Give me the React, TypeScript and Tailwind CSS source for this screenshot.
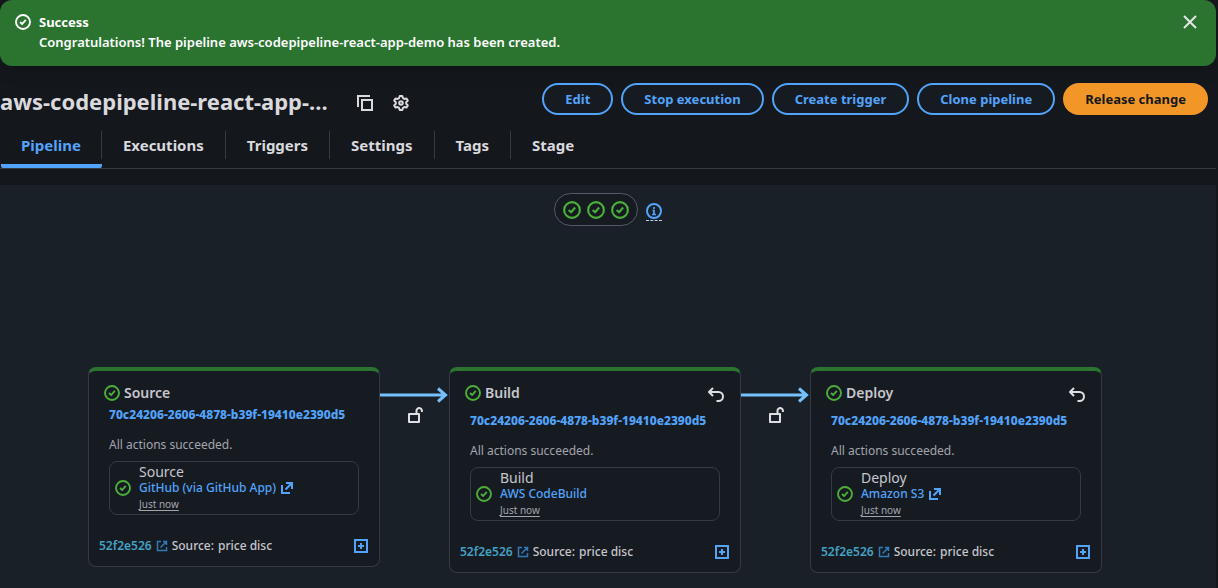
import React from "react";

type IconProps = { className?: string };

const SuccessIcon = ({ className = "" }: IconProps) => (
  <svg viewBox="0 0 16 16" fill="none" stroke="currentColor" strokeWidth="1.9" strokeLinejoin="round" className={className} aria-hidden="true">
    <circle cx="8" cy="8" r="7" />
    <path d="m5 8 2.200 2 3.600-4.200" />
  </svg>
);

const CloseIcon = () => (
  <svg viewBox="0 0 16 16" fill="none" stroke="currentColor" strokeWidth="2" className="size-4" aria-hidden="true">
    <path d="m2 2 12 12M14 2 2 14" />
  </svg>
);

const CopyIcon = () => (
  <svg viewBox="0 0 16 16" fill="none" stroke="currentColor" strokeWidth="2" className="size-4" aria-hidden="true">
    <path d="M1 12V1h12" />
    <path d="M5 5h10v10H5z" />
  </svg>
);

const GearIcon = () => (
  <svg viewBox="0 0 16 16" fill="none" stroke="currentColor" strokeWidth="2" strokeLinejoin="round" className="size-4" aria-hidden="true">
    <path d="M6.700 1h2.600l.7 2.200 1.200.7 2.300-.5 1.300 2.200-1.600 1.700v1.400l1.600 1.700-1.300 2.200-2.300-.5-1.200.7L9.300 15H6.700L6 12.800l-1.200-.7-2.300.5-1.300-2.200 1.600-1.700V7.300L1.200 5.600l1.300-2.200 2.300.5L6 3.200z" />
    <circle cx="8" cy="8" r="1.800" />
  </svg>
);

const InfoIcon = () => (
  <svg viewBox="0 0 16 16" fill="none" stroke="currentColor" strokeWidth="2" className="size-4" aria-hidden="true">
    <circle cx="8" cy="8" r="7" />
    <path d="M8 4v2M6.500 7.500H8V11M6 11.500h4" strokeWidth="1.700" />
  </svg>
);

const UndoIcon = () => (
  <svg viewBox="0 0 16 16" fill="none" stroke="currentColor" strokeWidth="2" strokeLinejoin="round" className="size-4" aria-hidden="true">
    <path d="M5 1 1 5l4 4" />
    <path d="M1 5h9.500a4.500 4.500 0 0 1 0 9H8.500" />
  </svg>
);

const UnlockIcon = () => (
  <svg viewBox="0 0 16 16" fill="none" stroke="currentColor" strokeWidth="2" strokeLinejoin="round" className="size-4" aria-hidden="true">
    <path d="M2 7h10v8H2z" />
    <path d="M9.500 7V4a2.700 2.700 0 0 1 5.400-.5V5" />
  </svg>
);

const ExternalIcon = ({ className = "" }: IconProps) => (
  <svg viewBox="0 0 14 14" fill="none" stroke="currentColor" strokeWidth="2" className={className} aria-hidden="true">
    <path d="M6 2h6v6M12 2 5.500 8.500M2 4v8h8" />
  </svg>
);

const BoxedExternalIcon = () => (
  <svg viewBox="0 0 12 12" fill="none" stroke="currentColor" strokeWidth="1.500" className="size-3" aria-hidden="true">
    <path d="M5 1.500H1.500v9h9V7M7 1.500h3.500V5M10.500 1.500 4.500 7.500" />
  </svg>
);

const PlusBoxIcon = () => (
  <svg viewBox="0 0 14 14" fill="none" stroke="currentColor" strokeWidth="2" className="size-3.5" aria-hidden="true">
    <path d="M1 1h12v12H1zM7 4v6M4 7h6" />
  </svg>
);

const tabs = ["Pipeline", "Executions", "Triggers", "Settings", "Tags", "Stage"];
const actions = ["Edit", "Stop execution", "Create trigger", "Clone pipeline"];

type Stage = { name: string; provider: string; external: boolean; rollback: boolean };

const stages: Stage[] = [
  { name: "Source", provider: "GitHub (via GitHub App)", external: true, rollback: false },
  { name: "Build", provider: "AWS CodeBuild", external: false, rollback: true },
  { name: "Deploy", provider: "Amazon S3", external: true, rollback: true },
];

function StageCard({ stage }: { stage: Stage }) {
  return (
    <section className="w-[292px] shrink-0 rounded-lg border border-t-4 border-[#363a44] border-t-[#2b7430] bg-[#161b22] px-2.5 pt-3 pb-2.5">
      <div className={stage.rollback ? "flex h-[30px] items-start justify-between pr-1.5 pl-[5px]" : "flex h-6 items-start justify-between pr-1.5 pl-[5px]"}>
        <h2 className="flex items-center gap-1 text-[14px] leading-5 font-semibold text-[#c6c6cd]">
          <SuccessIcon className="size-4 text-[#4caf3a]" />
          {stage.name}
        </h2>
        {stage.rollback && (
          <button type="button" aria-label="Roll back" className="mt-1 text-[#dedee3]">
            <UndoIcon />
          </button>
        )}
      </div>
      <div className="px-2.5">
        <a href="#execution" className="block text-[12px] leading-4 font-extrabold whitespace-nowrap text-[#52a3fa]">
          70c24206-2606-4878-b39f-19410e2390d5
        </a>
        <p className="mt-3.5 text-[12px] leading-4 text-[#a4a4ad]">All actions succeeded.</p>
        <div className="mt-2 flex h-[54px] items-center gap-2 rounded-lg border border-[#363a44] px-[5px]">
          <SuccessIcon className="size-4 text-[#4caf3a]" />
          <div>
            <h3 className="text-[14px] leading-4 text-[#c6c6cd]">{stage.name}</h3>
            <a href="#provider" className="flex items-center gap-1 text-[12px] leading-4 font-medium whitespace-nowrap text-[#52a3fa]">
              {stage.provider}
              {stage.external && <ExternalIcon className="size-3.5" />}
            </a>
            <p className="text-[10px] leading-4 text-[#a4a4ad] underline underline-offset-2">Just now</p>
          </div>
        </div>
      </div>
      <div className="mt-[21px] flex h-5 items-center text-[12px] leading-4 font-medium text-[#c6c6cd]">
        <a href="#commit" className="flex items-center gap-1 font-semibold text-[#44a1c4]">
          52f2e526
          <span className="text-[#3179b8]"><BoxedExternalIcon /></span>
        </a>
        <span className="ml-1">Source:</span>
        <span className="ml-1">price disc</span>
        <button type="button" aria-label="Show details" className="mr-px ml-auto text-[#52a3fa]">
          <PlusBoxIcon />
        </button>
      </div>
    </section>
  );
}

function Transition() {
  return (
    <div className="flex w-[69px] shrink-0 flex-col items-center pt-5">
      <svg viewBox="0 0 69 16" fill="none" stroke="#75c1fd" strokeWidth="3" className="h-4 w-[69px]" aria-hidden="true">
        <path d="M0 8h65M58 1.500l7.500 6.500-7.500 6.500" />
      </svg>
      <button type="button" aria-label="Disable transition" className="mt-1 text-[#dedee3]">
        <UnlockIcon />
      </button>
    </div>
  );
}

export default function App() {
  return (
    <div className="flex min-h-screen flex-col bg-[#14171c] pr-0.5 font-['Noto_Sans','Open_Sans',sans-serif] text-[#d9d9de]">
      <div role="status" className="flex items-start gap-2 rounded-xl bg-[#2b7430] px-[15px] pt-3 pb-3.5 text-[13px] leading-5 text-white shadow-lg">
        <SuccessIcon className="mt-0.5 size-4 shrink-0" />
        <div className="grow">
          <p className="font-bold">Success</p>
          <p className="font-semibold">Congratulations! The pipeline aws-codepipeline-react-app-demo has been created.</p>
        </div>
        <button type="button" aria-label="Dismiss" className="mt-0.5 mr-[3px] text-[#e5e5ea]">
          <CloseIcon />
        </button>
      </div>

      <header className="flex items-start justify-between pt-[17px] pr-2">
        <div className="flex items-center pt-0.5 pb-0.5">
          <h1 className="text-[22px] leading-8 font-bold whitespace-nowrap">aws-codepipeline-react-app-...</h1>
          <button type="button" aria-label="Copy" className="mt-1 ml-[29px]"><CopyIcon /></button>
          <button type="button" aria-label="Preferences" className="mt-1 ml-5"><GearIcon /></button>
        </div>
        <div className="flex gap-2 text-[13px] leading-5 font-bold whitespace-nowrap">
          {actions.map((label) => (
            <button key={label} type="button" className="h-8 rounded-full border-2 border-[#52a3fa] bg-[#161b22] px-[21px] text-[#52a3fa]">
              {label}
            </button>
          ))}
          <button type="button" className="h-8 rounded-full bg-[#f29727] px-[22px] text-[#14171c]">Release change</button>
        </div>
      </header>

      <nav role="tablist" aria-label="Pipeline views" className="flex border-b border-[#363a44] pt-0.5 pl-px text-[15px] leading-7 font-bold">
        {tabs.map((label, i) => (
          <button
            key={label}
            type="button"
            role="tab"
            aria-selected={i === 0}
            className={i === 0 ? "rounded-b-xs border-b-4 border-[#52a3fa] text-[#52a3fa]" : "border-b-4 border-transparent"}
          >
            <span
              className={
                i === 0
                  ? "mt-2.5 mb-[5px] block border-r border-[#363a44] px-5"
                  : i === tabs.length - 1
                    ? "mt-2.5 mb-[5px] block px-[21px]"
                    : "mt-2.5 mb-[5px] block border-r border-[#363a44] px-[21px]"
              }
            >
              {label}
            </span>
          </button>
        ))}
      </nav>

      <main className="mt-4 grow bg-[#1a2027] px-[88px] pt-2 pb-4">
        <div className="flex justify-center gap-2">
          <div className="flex h-[33px] w-[84px] items-center justify-center gap-1.5 rounded-full border border-[#555a66] bg-[#161b22] text-[#4caf3a]">
            {stages.map((s) => <SuccessIcon key={s.name} className="size-[18px]" />)}
          </div>
          <button type="button" aria-label="Info" className="mt-[9px] h-[19px] self-start border-b border-dashed border-[#b5cfe8] text-[#52a3fa]">
            <InfoIcon />
          </button>
        </div>
        <div className="mt-[141px] flex items-start">
          {stages.map((stage, i) => (
            <React.Fragment key={stage.name}>
              {i > 0 && <Transition />}
              <StageCard stage={stage} />
            </React.Fragment>
          ))}
        </div>
      </main>
    </div>
  );
}
